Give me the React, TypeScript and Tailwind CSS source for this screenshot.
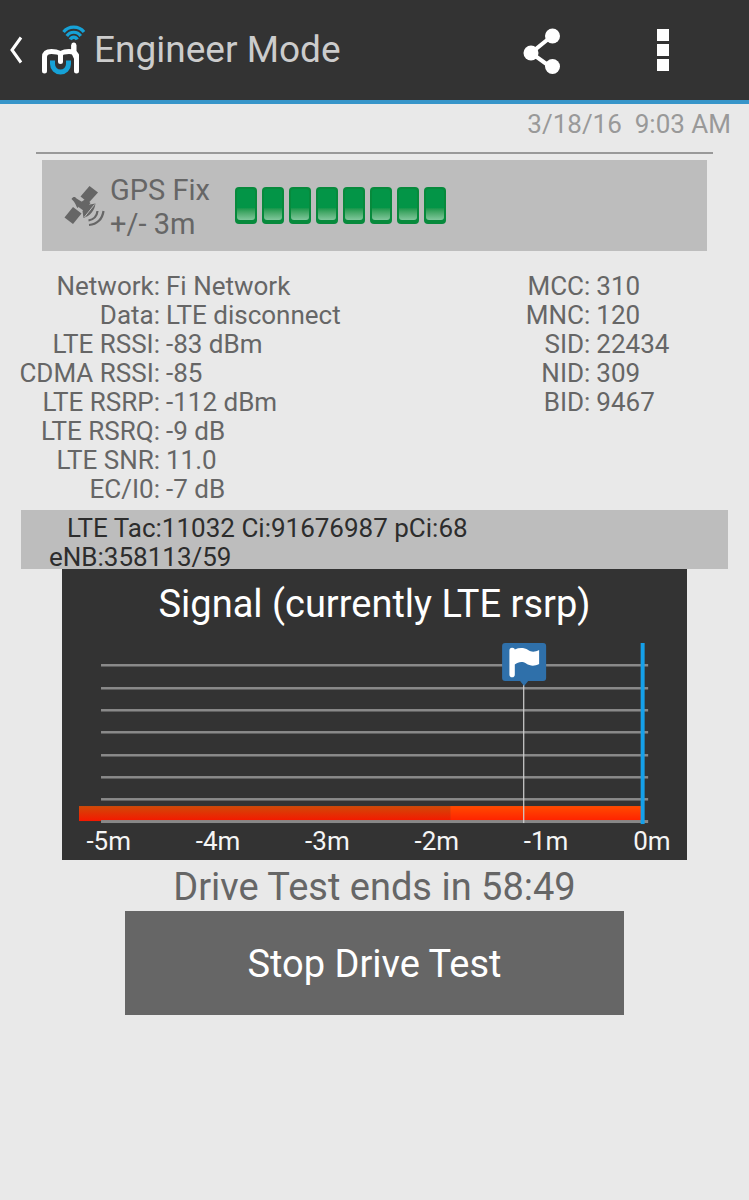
const networkInfo: [string, string][] = [
  ['Network:', 'Fi Network'],
  ['Data:', 'LTE disconnect'],
  ['LTE RSSI:', '-83 dBm'],
  ['CDMA RSSI:', '-85'],
  ['LTE RSRP:', '-112 dBm'],
  ['LTE RSRQ:', '-9 dB'],
  ['LTE SNR:', '11.0'],
  ['EC/I0:', '-7 dB'],
];

const cellInfo: [string, string][] = [
  ['MCC:', '310'],
  ['MNC:', '120'],
  ['SID:', '22434'],
  ['NID:', '309'],
  ['BID:', '9467'],
];

const gridLines = [95, 118, 140, 162, 185, 207, 229];
const axisLabels = ['-5m', '-4m', '-3m', '-2m', '-1m', '0m'];

function Logo() {
  return (
    <svg width="44" height="50" viewBox="0 0 44 50" fill="none" aria-hidden="true">
      <g stroke="#16a2d7" strokeWidth="3.2">
        <path d="M21.5 7C26.500 0.500 37 0.500 42 7" />
        <path d="M24.800 11C28.200 6 35.300 6 38.700 11" />
        <path d="M28.300 14.500C30 11.400 33.500 11.400 35.200 14.500" strokeWidth="3.600" />
      </g>
      <path d="M10.500 35.500V39A8 8 0 0 0 26.500 39V35.500" stroke="#16a2d7" strokeWidth="5" />
      <path
        d="M2.500 46V32C2.500 28 5 26.500 9.500 26.500C15 26.500 18.500 27.500 18.500 30.500V36.500M18.500 30.500C18.500 27.500 22 26.500 27 26.500C32 26.500 34.500 28 34.500 32V46M31.800 27.500V20"
        stroke="#fff"
        strokeWidth="5"
        strokeLinecap="round"
      />
      <path d="M29.300 20H34.300V27L37 30V36H33L29.300 28Z" fill="#fff" />
    </svg>
  );
}

function Satellite() {
  return (
    <svg width="42" height="42" viewBox="0 0 42 42" aria-hidden="true">
      <g fill="#666">
        <path d="M25.500 1L34 7.500L24.500 18L16.500 11.500Z" />
        <path d="M9 22L17.500 28.500L9 39L0.500 32.500Z" />
        <path d="M16.500 17.500L21.500 14L26.500 18L20 26L14.500 22Z" />
        <path d="M7.500 14C9.500 11 11.500 12 12.500 13.500L19 17.500L13.500 23C11.500 20.500 12 18 7.500 14Z" />
        <path d="M31.500 18.500C30.500 26 26 31 19.500 33L18.500 26L23 20Z" />
      </g>
      <path d="M20.500 32L30.500 19.500" stroke="#bdbdbd" strokeWidth="1" />
      <g fill="none" stroke="#666" strokeWidth="2.2">
        <path d="M24.500 35.500C29.500 34.500 33 31 33.500 26" />
        <path d="M25 40C33 39.500 38.500 34 39.500 26" />
      </g>
    </svg>
  );
}

function InfoList({ rows, className }: { rows: [string, string][]; className: string }) {
  return (
    <dl className={className}>
      {rows.map(([label, value]) => (
        <div key={label} className="contents">
          <dt className="text-right whitespace-nowrap">{label}</dt>
          <dd>{value}</dd>
        </div>
      ))}
    </dl>
  );
}

function SignalChart() {
  return (
    <figure className="flex w-5/6 flex-col bg-[#333] pb-[3px]">
      <figcaption className="pt-3 text-center text-[38px] leading-[46px] text-white">
        Signal (currently LTE rsrp)
      </figcaption>
      <svg className="block w-full" viewBox="0 58 624 198" role="img" aria-label="Signal strength over time">
        <defs>
          <linearGradient id="older" x1="0" y1="0" x2="0" y2="1">
            <stop offset="0" stopColor="#d04a08" />
            <stop offset="1" stopColor="#f51800" />
          </linearGradient>
          <linearGradient id="recent" x1="0" y1="0" x2="0" y2="1">
            <stop offset="0" stopColor="#ff4b00" />
            <stop offset="1" stopColor="#ff2100" />
          </linearGradient>
        </defs>
        {gridLines.map((y) => (
          <rect key={y} x="39" y={y} width="547" height="2.5" fill="#8a8a8a" />
        ))}
        <rect x="17" y="237" width="371" height="15" fill="url(#older)" />
        <rect x="388" y="237" width="192" height="15" fill="url(#recent)" />
        <rect x="39" y="251" width="547" height="3" fill="#888" />
        <rect x="461" y="110" width="1.2" height="144" fill="#d0d0d0" />
        <path
          d="M443 74H481Q484 74 484 77V109Q484 112 481 112H466L462 117L458 112H443Q440 112 440 109V77Q440 74 443 74Z"
          fill="#2f70aa"
        />
        <path
          d="M447.300 81.500Q447.300 78.700 450 78.700Q452.700 78.700 452.700 80.500C457 78.500 462 78.500 466 81C469.500 83.500 473 83 477 81V95C472 97.500 468 97 464 94.500C460 92 456 93 452.700 95.500V105.500Q452.700 108.300 450 108.300Q447.300 108.300 447.300 105.500Z"
          fill="#fff"
        />
        <rect x="578.5" y="74" width="4" height="181" fill="#15a0ea" />
      </svg>
      <div className="flex justify-between pr-4 pl-6 text-[26px] leading-8 text-[#f5f5f5]">
        {axisLabels.map((label) => (
          <span key={label}>{label}</span>
        ))}
      </div>
    </figure>
  );
}

export default function App() {
  return (
    <div className="min-h-screen bg-[#e9e9e9] font-[Roboto,sans-serif] text-[#666]">
      <header className="flex h-[104px] items-center border-b-4 border-[#3795c9] bg-[#333] text-[#ccc]">
        <button type="button" aria-label="Back" className="flex items-center gap-[18px] pl-2">
          <svg width="16" height="28" viewBox="0 0 16 28" fill="none" aria-hidden="true">
            <path d="M13 1.500L4 14L13 26.500" stroke="#fff" strokeWidth="3" />
          </svg>
          <Logo />
        </button>
        <h1 className="flex-1 pl-2 text-[37px] leading-[44px]">Engineer Mode</h1>
        <button type="button" aria-label="Share" className="mr-24">
          <svg width="38" height="48" viewBox="0 0 38 48" aria-hidden="true">
            <path d="M29 10L8 27L29 42" fill="none" stroke="#fff" strokeWidth="4" />
            <g fill="#fff">
              <circle cx="29.500" cy="10" r="7.500" />
              <circle cx="8" cy="27" r="7.500" />
              <circle cx="29.500" cy="40.500" r="7.500" />
            </g>
          </svg>
        </button>
        <button type="button" aria-label="More options" className="mr-20 flex flex-col gap-[3px]">
          <span className="size-3 bg-white" />
          <span className="size-3 bg-white" />
          <span className="size-3 bg-white" />
        </button>
      </header>

      <main>
        <p className="pr-[18px] text-right text-[26px] leading-10 whitespace-pre text-[#999]">{'3/18/16  9:03 AM'}</p>
        <hr className="mt-2 mr-9 ml-9 border-t-2 border-[#999]" />

        <section className="mt-[6px] mr-[42px] ml-[42px] flex h-[91px] items-center bg-[#bdbdbd] pl-[22px]">
          <Satellite />
          <p className="w-32 pt-[2px] pl-1 text-[29px] leading-[34px] whitespace-nowrap">
            GPS Fix
            <br />
            +/- 3m
          </p>
          <div className="ml-[1px] flex gap-[5px]" role="img" aria-label="GPS signal 8 of 8">
            {Array.from({ length: 8 }, (_, i) => (
              <span key={i} className="h-[37px] w-[22px] rounded-[4px] bg-[#078a3c] p-[2px] pb-1">
                <span className="block h-full rounded-[3px] bg-linear-to-b from-[#039547] from-60% to-[#7fc79c]" />
              </span>
            ))}
          </div>
        </section>

        <section className="mt-[21px] flex text-[26px] leading-[29px]">
          <InfoList
            rows={networkInfo}
            className="grid w-2/3 grid-cols-[160px_1fr] content-start gap-x-[6px]"
          />
          <InfoList
            rows={cellInfo}
            className="grid w-1/3 grid-cols-[91px_1fr] content-start gap-x-[6px]"
          />
        </section>

        <p className="mx-[21px] mt-[6px] h-[59px] bg-[#bdbdbd] pt-1 pl-7 indent-[18px] text-[26px] leading-[29px] text-[#2d2d2d]">
          LTE Tac:11032 Ci:91676987 pCi:68
          <br />
          eNB:358113/59
        </p>

        <section className="flex flex-col items-center">
          <SignalChart />
          <p className="mt-1 text-[38px] leading-[47px]">Drive Test ends in 58:49</p>
          <button type="button" className="h-[104px] w-2/3 bg-[#666] pt-[2px] text-[38px] text-white">
            Stop Drive Test
          </button>
        </section>
      </main>
    </div>
  );
}
